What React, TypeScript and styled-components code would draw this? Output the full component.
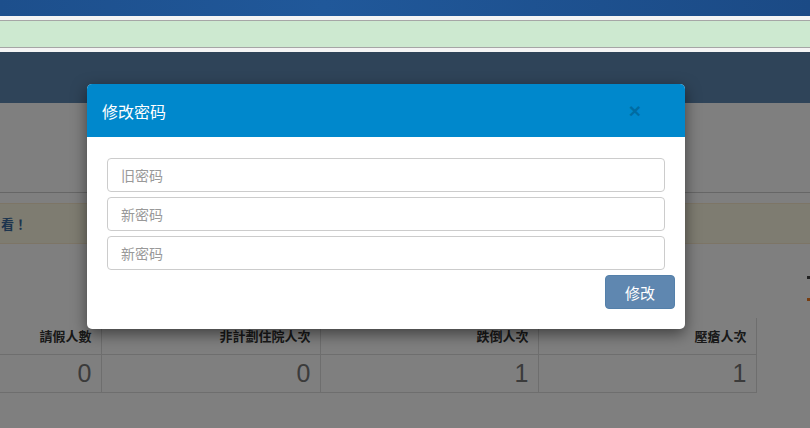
import React from "react";
import styled, { createGlobalStyle } from "styled-components";

const Global = createGlobalStyle`
  html, body { margin: 0; padding: 0; background: #fff; overflow: hidden; }
  body { font-family: "Liberation Sans", "Noto Sans CJK SC", sans-serif; font-size: 14px; color: #333; }
  * { box-sizing: border-box; }
`;

const Page = styled.div`
  position: relative;
  width: 810px;
  height: 428px;
  overflow: hidden;
  display: flex;
  flex-direction: column;
`;

const TopBar = styled.div`
  height: 16px;
  background: linear-gradient(90deg, #1d4f8c 0%, #20589a 40%, #1b4a85 100%);
`;

const StatusStrip = styled.div`
  height: 36px;
  background: #f4f4f4;
  padding: 4px 0;
  display: flex;
`;

const GreenBar = styled.div`
  flex: 1;
  background: #cde9d0;
  border-top: 1px solid #a6a6a6;
  border-bottom: 1px solid #a6a6a6;
`;

const AppFrame = styled.div`
  flex: 1;
  display: flex;
  flex-direction: column;
  background: #fff;
`;

const NavBand = styled.div`
  height: 51px;
  background: #5e88b2;
`;

const Toolbar = styled.div`
  height: 90px;
  border-bottom: 1px solid #cccccc;
`;

const Alert = styled.div`
  margin-top: 10px;
  height: 41px;
  background: #fcf8e3;
  border-top: 1px solid #faebcc;
  border-bottom: 1px solid #faebcc;
  display: flex;
  align-items: center;
  padding-left: 1px;
  font-family: "Noto Sans CJK TC", sans-serif;
  font-size: 13px;
  font-weight: 700;
  color: #3b6a9c;
`;

const TableWrap = styled.div`
  margin-top: 74px;
  width: 756px;
`;

const Table = styled.table`
  border-collapse: collapse;
  width: 100%;
  table-layout: fixed;
`;

const Th = styled.th<{ $w: number; $first?: boolean }>`
  width: ${(p) => p.$w}px;
  height: 36px;
  padding: 0 9px;
  text-align: right;
  font-family: "Noto Sans CJK TC", sans-serif;
  font-size: 13px;
  font-weight: 700;
  color: #333;
  border: 1px solid #dddddd;
  border-left: ${(p) => (p.$first ? "none" : "1px solid #dddddd")};
  border-top: none;
  white-space: nowrap;
`;

const Td = styled.td<{ $first?: boolean }>`
  height: 38px;
  padding: 0 9px;
  text-align: right;
  font-family: "Liberation Sans", Arial, sans-serif;
  font-size: 25px;
  color: #777;
  border: 1px solid #dddddd;
  border-left: ${(p) => (p.$first ? "none" : "1px solid #dddddd")};
`;

const EdgeMark = styled.div`
  position: absolute;
  right: 0;
  top: 276px;
  width: 3px;
  height: 25px;
  display: flex;
  flex-direction: column;
  justify-content: space-between;
`;

const EdgeDot = styled.span<{ $c: string }>`
  display: block;
  height: 3px;
  background: ${(p) => p.$c};
`;

const Backdrop = styled.div`
  position: absolute;
  left: 0;
  right: 0;
  top: 52px;
  bottom: 0;
  background: rgba(0, 0, 0, 0.5);
`;

const Modal = styled.div`
  position: absolute;
  left: 87px;
  top: 84px;
  width: 598px;
  background: #fff;
  border-radius: 5px;
  overflow: hidden;
  box-shadow: 0 5px 15px rgba(0, 0, 0, 0.5);
`;

const ModalHeader = styled.div`
  height: 53px;
  background: #0088cc;
  display: flex;
  align-items: center;
  justify-content: space-between;
  padding: 0 44px 0 15px;
`;

const Title = styled.h4`
  margin: 0;
  font-family: "Noto Sans CJK SC", sans-serif;
  font-size: 16px;
  font-weight: 400;
  color: #fff;
  line-height: 22px;
`;

const Close = styled.button`
  border: none;
  background: transparent;
  padding: 0;
  font-family: "Liberation Sans", Arial, sans-serif;
  font-size: 21px;
  font-weight: 700;
  line-height: 1;
  color: #000;
  opacity: 0.2;
  cursor: pointer;
`;

const ModalBody = styled.div`
  padding: 21px 20px 20px;
  display: flex;
  flex-direction: column;
  gap: 5px;
`;

const Input = styled.input`
  height: 34px;
  width: 100%;
  padding: 6px 13px;
  border: 1px solid #cccccc;
  border-radius: 4px;
  font-family: "Noto Sans CJK SC", sans-serif;
  font-size: 14px;
  color: #555;
  outline: none;
  &::placeholder { color: #999; }
`;

const Actions = styled.div`
  display: flex;
  justify-content: flex-end;
  margin-right: -10px;
`;

const SubmitButton = styled.button`
  width: 70px;
  height: 34px;
  border: 1px solid #5480aa;
  border-radius: 4px;
  background: #5f87b0;
  color: #fff;
  font-family: "Noto Sans CJK SC", sans-serif;
  font-size: 15px;
  cursor: pointer;
`;

const columns = [
  { label: "請假人數", w: 101, v: "0" },
  { label: "非計劃住院人次", w: 219, v: "0" },
  { label: "跌倒人次", w: 218, v: "1" },
  { label: "壓瘡人次", w: 218, v: "1" },
];

export default function App() {
  return (
    <>
      <Global />
      <Page>
        <TopBar />
        <StatusStrip>
          <GreenBar />
        </StatusStrip>
        <AppFrame>
          <NavBand />
          <Toolbar />
          <Alert>看！</Alert>
          <TableWrap>
            <Table>
              <thead>
                <tr>
                  {columns.map((c, i) => (
                    <Th key={c.label} $w={c.w} $first={i === 0}>
                      {c.label}
                    </Th>
                  ))}
                </tr>
              </thead>
              <tbody>
                <tr>
                  {columns.map((c, i) => (
                    <Td key={c.label} $first={i === 0}>
                      {c.v}
                    </Td>
                  ))}
                </tr>
              </tbody>
            </Table>
          </TableWrap>
        </AppFrame>
        <EdgeMark>
          <EdgeDot $c="#444" />
          <EdgeDot $c="#f07a20" />
        </EdgeMark>
        <Backdrop />
        <Modal>
          <ModalHeader>
            <Title>修改密码</Title>
            <Close aria-label="close">×</Close>
          </ModalHeader>
          <ModalBody>
            <Input type="password" placeholder="旧密码" />
            <Input type="password" placeholder="新密码" />
            <Input type="password" placeholder="新密码" />
            <Actions>
              <SubmitButton>修改</SubmitButton>
            </Actions>
          </ModalBody>
        </Modal>
      </Page>
    </>
  );
}
